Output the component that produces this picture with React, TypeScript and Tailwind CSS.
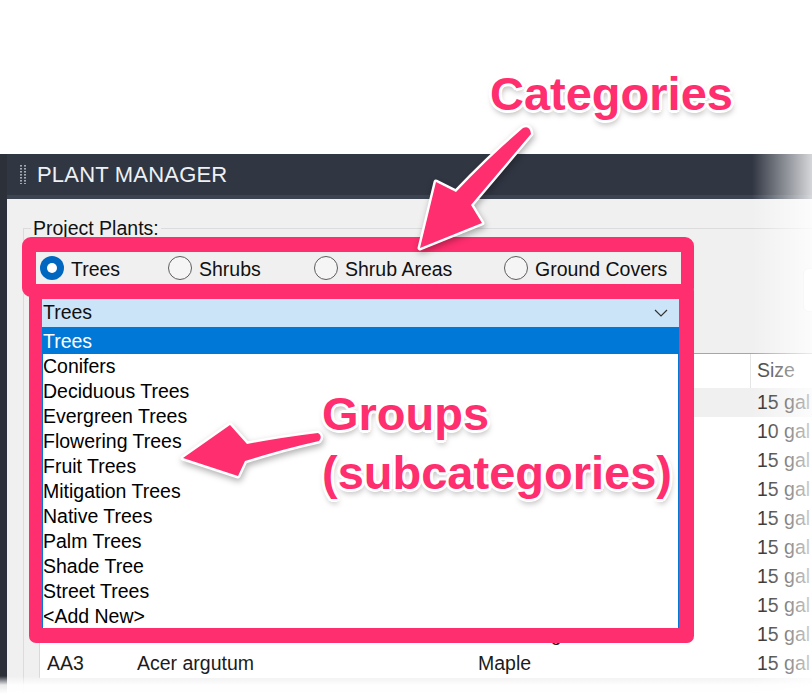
import React from 'react';

const GROUPS = [
  'Conifers',
  'Deciduous Trees',
  'Evergreen Trees',
  'Flowering Trees',
  'Fruit Trees',
  'Mitigation Trees',
  'Native Trees',
  'Palm Trees',
  'Shade Tree',
  'Street Trees',
  '<Add New>',
];

const PLANTS = [
  { code: 'AB1', name: 'Acer buergerianum', common: 'Trident Maple', size: '15 gal' },
  { code: 'AC1', name: 'Acer campestre', common: 'Hedge Maple', size: '10 gal' },
  { code: 'AC2', name: 'Acer circinatum', common: 'Vine Maple', size: '15 gal' },
  { code: 'AG1', name: 'Acer griseum', common: 'Paperbark Maple', size: '15 gal' },
  { code: 'AP1', name: 'Acer palmatum', common: 'Japanese Maple', size: '15 gal' },
  { code: 'AR1', name: 'Acer rubrum', common: 'Red Maple', size: '15 gal' },
  { code: 'AS1', name: 'Acer saccharum', common: 'Sugar Maple', size: '15 gal' },
  { code: 'AA1', name: 'Acer macrophyllum', common: 'Bigleaf Maple', size: '15 gal' },
  { code: 'AA2', name: 'Acer truncatum', common: 'Shantung Elm', size: '15 gal' },
  { code: 'AA3', name: 'Acer argutum', common: 'Maple', size: '15 gal' },
];

const LABEL =
  "font-bold text-[47px] text-[#ff2e6e] [text-shadow:0_3px_0_#fff,0_-3px_0_#fff,3px_0_0_#fff,-3px_0_0_#fff,2px_2px_0_#fff,-2px_2px_0_#fff,2px_-2px_0_#fff,-2px_-2px_0_#fff,1px_4px_6px_rgba(0,0,0,0.35)]";

function Radio({ label, checked, className }: { label: string; checked?: boolean; className: string }) {
  return (
    <label className={`flex items-center gap-[7px] ${className}`}>
      {checked ? (
        <span className="w-[24px] h-[24px] rounded-full bg-[#0067c0] flex items-center justify-center shrink-0">
          <span className="w-[10px] h-[10px] rounded-full bg-white" />
        </span>
      ) : (
        <span className="w-[24px] h-[24px] rounded-full border-[1.5px] border-[#5d5d5d] bg-[#f5f5f5] shrink-0" />
      )}
      <span className="leading-[24px] pt-[1px]">{label}</span>
    </label>
  );
}

export default function App() {
  return (
    <div className="relative w-[812px] h-[694px] overflow-hidden bg-white font-['Liberation_Sans',Arial,sans-serif] text-[19.5px] text-[#111]">
      <div className="h-[154px]" />

      {/* Plant manager window */}
      <div className="flex h-[540px]">
        <div className="w-[7px] bg-[#2c3039]" />
        <div className="flex-1 flex flex-col">
          <div className="h-[45px] shrink-0 bg-[#303642] border-b-[4px] border-[#3c4452] flex items-center pl-[13px]">
            <svg width="6" height="19" viewBox="0 0 6 19">
              {[0, 3, 6, 9, 12, 15, 18].map((y) => (
                <g key={y} fill="#a3a9b1">
                  <rect x="0" y={y} width="2" height="1.6" />
                  <rect x="4" y={y} width="2" height="1.6" />
                </g>
              ))}
            </svg>
            <span className="ml-[11px] text-[22px] text-[#eef1f4] tracking-[0.2px]">PLANT MANAGER</span>
          </div>

          <div className="flex-1 bg-[#f0f0f0] pt-[18px] pl-[16px]">
            <fieldset className="h-full min-w-0 border border-r-0 border-[#dcdcdc]">
              <legend className="ml-[7px] px-[2px] leading-[22px]">Project Plants:</legend>

              {/* Categories */}
              <div className="mt-[13px] h-[32px] flex items-center pl-[16px]">
                <Radio label="Trees" checked className="w-[128px]" />
                <Radio label="Shrubs" className="w-[146px]" />
                <Radio label="Shrub Areas" className="w-[190px]" />
                <Radio label="Ground Covers" className="w-[170px]" />
                <div className="ml-auto mr-[-31px] self-start mt-[16px] w-[40px] h-[44px] shrink-0 rounded-md bg-white border border-[#e6e6e6]" />
              </div>

              {/* Group combo */}
              <div className="relative ml-[18px] mt-[15px] w-[637px]">
                <div className="h-[28px] bg-[#cce4f7] flex items-center justify-between pl-[1px] pr-[11px]">
                  <span>Trees</span>
                  <svg width="14" height="8" viewBox="0 0 14 8">
                    <path d="M1 1 L7 7 L13 1" fill="none" stroke="#333" strokeWidth="1.2" />
                  </svg>
                </div>
                <div className="absolute left-0 top-full w-full z-10 bg-white border border-[#0078d7]">
                  <div className="h-[26px] pt-[1px] leading-[25px] bg-[#0078d7] text-white">Trees</div>
                  {GROUPS.map((g) => (
                    <div key={g} className="h-[25px] leading-[25px] text-black">
                      {g}
                    </div>
                  ))}
                </div>
              </div>

              {/* Plants table */}
              <div className="ml-[15px] mt-[26px] border-l border-t border-l-[#d9d9d9] border-t-[#a6a6a6] bg-white">
                <div className="grid grid-cols-[89px_341px_280px_1fr] h-[34px] text-[#333]">
                  <div className="flex items-center pl-[7px]">Code</div>
                  <div className="flex items-center pl-[8px] border-l border-[#e5e5e5]">Botanical Name</div>
                  <div className="flex items-center pl-[8px] border-l border-[#e5e5e5]">Common Name</div>
                  <div className="flex items-center pl-[6px] border-l border-[#e5e5e5]">Size</div>
                </div>
                {PLANTS.map((p, i) => (
                  <div
                    key={p.code}
                    className={`grid grid-cols-[89px_341px_280px_1fr] h-[29px] items-center text-[#1c1c1c] ${
                      i === 0 ? 'bg-[#f0f0f0]' : 'bg-white'
                    }`}
                  >
                    <div className="pl-[7px]">{p.code}</div>
                    <div className="pl-[8px]">{p.name}</div>
                    <div className="pl-[8px]">{p.common}</div>
                    <div className="pl-[7px] whitespace-nowrap">{p.size}</div>
                  </div>
                ))}
              </div>
            </fieldset>
          </div>
        </div>
      </div>

      {/* Highlight frames */}
      <div className="absolute z-20 left-[22px] top-[237px] w-[672px] h-[60px] border-[#ff2e6e] border-t-[15px] border-l-[14px] border-r-[13px] border-b-[13px] rounded-[9px]" />
      <div className="absolute z-20 left-[29px] top-[284px] w-[665px] h-[359px] border-[#ff2e6e] border-t-[15px] border-l-[13px] border-r-[15px] border-b-[15px] rounded-[7px]" />

      {/* Arrows */}
      <svg
        className="absolute inset-0 z-30 pointer-events-none drop-shadow-[1px_3px_3px_rgba(0,0,0,0.3)]"
        width="812"
        height="694"
        viewBox="0 0 812 694"
      >
        <path
          d="M523 128 Q486 160 456 192 L436 182 L420 248 L482 223 L471 205 Q499 172 531 134 Q530 125 523 128 Z"
          fill="#ff2e6e"
          stroke="#fff"
          strokeWidth="5"
          strokeLinejoin="round"
          paintOrder="stroke"
        />
        <path
          d="M318 433 Q284 437 247 444 L230 425 L183 458 L238 476 L245 461 Q283 449 319 441 Q323 436 318 433 Z"
          fill="#ff2e6e"
          stroke="#fff"
          strokeWidth="5"
          strokeLinejoin="round"
          paintOrder="stroke"
        />
      </svg>

      {/* Labels */}
      <div className={`absolute z-30 left-[490px] top-[70px] leading-none ${LABEL}`}>Categories</div>
      <div className={`absolute z-30 left-[322px] top-[384px] leading-[59px] ${LABEL}`}>
        <div>Groups</div>
        <div>(subcategories)</div>
      </div>

      {/* Screenshot edge fades */}
      <div className="absolute z-40 top-[154px] bottom-0 left-[752px] w-[60px] pointer-events-none bg-linear-to-r from-transparent to-white/80" />
      <div className="absolute z-40 left-0 right-0 bottom-0 h-[18px] pointer-events-none bg-linear-to-b from-white/0 via-white/90 to-white" />
    </div>
  );
}
